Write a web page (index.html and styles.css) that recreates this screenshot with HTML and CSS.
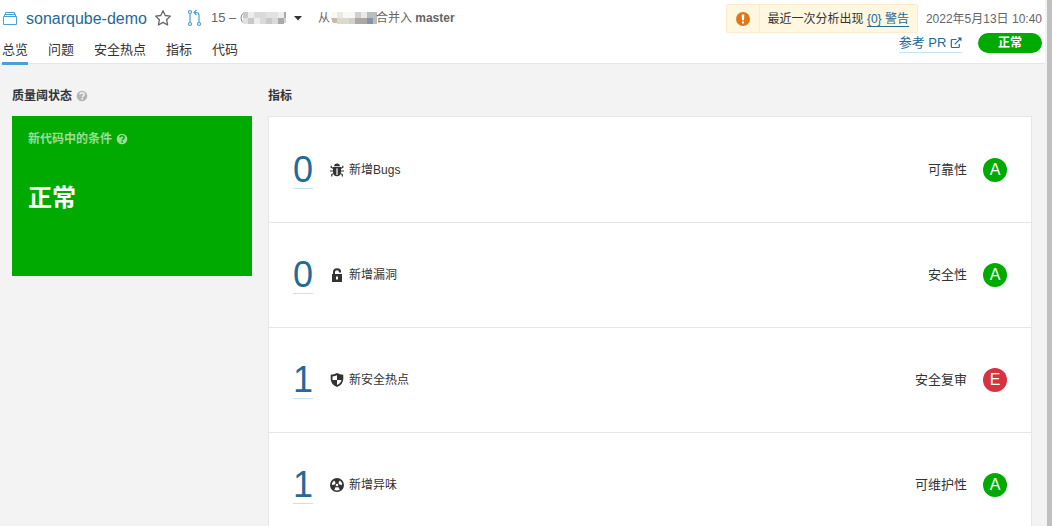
FILE: index.html
```html
<!DOCTYPE html>
<html lang="zh-CN">
<head>
<meta charset="utf-8">
<title>sonarqube-demo</title>
<link rel="stylesheet" href="styles.css">
</head>
<body>
<svg class="defs" aria-hidden="true">
  <symbol id="help" viewBox="0 0 12 12">
    <mask id="help-cut"><rect width="12" height="12" fill="#fff"/><path d="M4 4.600C4 3.300 4.900 2.700 6 2.700s2.100.7 2.100 1.800c0 1.400-1.700 1.400-1.800 2.800" fill="none" stroke="#000" stroke-width="1.500"/><rect x="5.400" y="8.100" width="1.600" height="1.500" fill="#000"/></mask>
    <circle cx="6" cy="6" r="5.300" fill="currentColor" mask="url(#help-cut)"/>
  </symbol>
</svg>
<div class="page">
  <header class="header">
    <div class="header-left">
      <div class="crumbs">
        <svg class="icon-project" width="16" height="16" viewBox="0 0 16 16" fill="none" stroke="#4b9fd5"><path d="M1.500 6.500h13v8h-13zM2.500 6.500v-2h11v2M3.500 4.500v-2h9v2"/></svg>
        <a class="project" href="#">sonarqube-demo</a>
        <button class="star" aria-label="收藏"><svg width="18" height="18" viewBox="0 0 18 18" fill="none" stroke="#666" stroke-width="1.300" stroke-linejoin="round"><path d="M9 1.700l2.200 4.800 5.200.6-3.800 3.600 1 5.300L9 13.400 4.400 16l1-5.300-3.800-3.600 5.200-.6z"/></svg></button>
        <svg class="icon-pr" width="16" height="18" viewBox="0 0 16 18" fill="none" stroke="#4b9fd5" stroke-width="1.200"><circle cx="3" cy="3" r="1.500"/><circle cx="3" cy="15" r="1.500"/><circle cx="12" cy="15" r="1.500"/><path d="M3 4.500v9M12 13.500V6.500Q12 3.500 9 3.500H7M9.500 1L7 3.500 9.500 6"/></svg>
        <button class="branch"><span>15 – </span><svg class="mosaic" width="47" height="12" viewBox="0 0 47 12" shape-rendering="crispEdges"><path d="M4 1Q1 2 1 6t3 5" fill="none" stroke="#888" shape-rendering="auto"/><path fill="#c9c9c9" d="M3 0h5v6H3zM26 6h6v6h-6zM8 6h6v6H8z"/><path fill="#ededed" d="M8 0h6v6H8zM38 0h6v6h-6zM14 6h6v6h-6z"/><path fill="#dadada" d="M14 0h12v6H14zM20 6h6v6h-6zM32 6h6v6h-6z"/><path fill="#e2e2e2" d="M26 0h12v6H26zM3 6h5v6H3z"/><path fill="#aaa" d="M38 6h6v6h-6zM44 0h2v6h-2z"/><path fill="#d0d0d0" d="M44 6h2v5h-2z"/></svg><svg class="caret" width="8" height="5" viewBox="0 0 8 5"><path d="M0 0h8L4 4.500z" fill="#333"/></svg></button>
        <p class="merge"><span>从</span><svg class="mosaic mosaic-source" width="48" height="12" viewBox="0 0 48 12" shape-rendering="crispEdges"><path fill="#faf8f3" d="M1 0h6v6H1zM13 0h12v6H13z"/><path fill="#e9e9e9" d="M7 0h6v6H7zM31 0h6v6h-6z"/><path fill="#d3cfd1" d="M25 0h6v6h-6zM19 6h6v6h-6z"/><path fill="#c8b9a8" d="M1 6h6v5H3z"/><path fill="#dedacb" d="M7 6h12v6H7z"/><path fill="#aaa9a5" d="M25 6h12v6H25z"/><path fill="#8794a8" d="M37 6h6v6h-6z"/><path fill="#b9bdc2" d="M37 0h10v6H37zM43 6h4v6h-4z"/></svg><span>合并入 <b>master</b></span></p>
      </div>
      <nav class="tabs">
        <a class="tab tab-active" href="#">总览</a>
        <a class="tab" href="#">问题</a>
        <a class="tab" href="#">安全热点</a>
        <a class="tab" href="#">指标</a>
        <a class="tab" href="#">代码</a>
      </nav>
    </div>
    <div class="header-right">
      <div class="meta">
        <div class="alert">
          <span class="alert-icon"><svg width="14" height="14" viewBox="0 0 14 14"><circle cx="7" cy="7" r="7" fill="#db781a"/><path d="M5.700 2.500h2.600L8 8.300H6zM6 9.500h2v2H6z" fill="#fff"/></svg></span>
          <span class="alert-text">最近一次分析出现 <a href="#">{0} 警告</a></span>
        </div>
        <time class="date">2022年5月13日 10:40</time>
      </div>
      <div class="status">
        <a class="pr-link" href="#">参考 PR <svg width="12" height="12" viewBox="0 0 12 12" fill="none" stroke="currentColor" stroke-width="1.200"><path d="M6.500 2.500H2.300Q1.300 2.500 1.300 3.500v6q0 1 1 1h6q1 0 1-1V7M4.700 7.300l5.500-5.500"/><path d="M7.500.5h4v4z" fill="currentColor" stroke="none"/></svg></a>
        <span class="pill">正常</span>
      </div>
    </div>
  </header>
  <main class="content">
    <section class="gate">
      <h2 class="title">质量阈状态 <svg class="help" width="12" height="12"><use href="#help"/></svg></h2>
      <div class="gate-card">
        <p class="gate-label">新代码中的条件 <svg class="gate-help" width="12" height="12"><use href="#help"/></svg></p>
        <p class="gate-value">正常</p>
      </div>
    </section>
    <section class="measures">
      <h2 class="title">指标</h2>
      <ul class="list">
        <li class="row">
          <a class="count" href="#">0</a>
          <svg class="row-icon" width="14" height="14" viewBox="0 0 14 14"><path d="M4 3.300Q4.300.5 7 .5t3 2.800zM3 4h8v5.500Q10.500 13 7 13.300 3.500 13 3 9.500z" fill="#333"/><path d="M6 5.500h2V12H6z" fill="#fff"/><path d="M6.600 5.500h.8V12h-.8z" fill="#333"/><path d="M3.500 5.500L1.200 4.300V2.800M10.500 5.500l2.300-1.200V2.800M0 8h3.500M10.500 8H14M3.700 10.500l-2 1v2M10.300 10.500l2 1v2" stroke="#333" fill="none" stroke-width="1.200"/></svg>
          <span class="name">新增Bugs</span><span class="domain">可靠性</span><span class="rating">A</span>
        </li>
        <li class="row">
          <a class="count" href="#">0</a>
          <svg class="row-icon" width="14" height="14" viewBox="0 0 14 14"><path fill="#333" fill-rule="evenodd" d="M2 6h1V4Q3 .2 7 .2T11 3.500V4.500H9V3.900Q9 2.200 7 2.200T5 4v2H12v8H2zM6 8.500v3h2v-3z"/></svg>
          <span class="name">新增漏洞</span><span class="domain">安全性</span><span class="rating">A</span>
        </li>
        <li class="row">
          <a class="count" href="#">1</a>
          <svg class="row-icon" width="14" height="14" viewBox="0 0 14 14"><path fill="#333" fill-rule="evenodd" d="M7 0Q4 1.800 .7 1.800V6q0 5.300 6.300 8 6.300-2.700 6.300-8V1.800Q10 1.800 7 0zM7 2.200V7h4.500Q11 10.200 7 12V7H2.500V3.400Q5 3.200 7 2.200z"/></svg>
          <span class="name">新安全热点</span><span class="domain">安全复审</span><span class="rating rating-e">E</span>
        </li>
        <li class="row">
          <a class="count" href="#">1</a>
          <svg class="row-icon" width="14" height="14" viewBox="0 0 14 14"><circle cx="7" cy="7" r="7" fill="#333"/><path fill="#fff" d="M1.900 5.800Q2.300 3.500 4.200 2.400L5.700 5Q4.900 5.500 4.700 6.600L2 7zM12.100 5.800Q11.700 3.500 9.800 2.400L8.300 5Q9.100 5.500 9.300 6.600L12 7zM4.200 11.700L5.700 9Q7 9.800 8.300 9l1.500 2.700Q7 13.100 4.200 11.700z"/><circle cx="7" cy="7" r="1.300" fill="#fff"/></svg>
          <span class="name">新增异味</span><span class="domain">可维护性</span><span class="rating">A</span>
        </li>
      </ul>
    </section>
  </main>
</div>
</body>
</html>
```
FILE: styles.css
```css
* { box-sizing: border-box; }
html { height: 100%; }
body {
  height: 100%;
  margin: 0;
  overflow: hidden;
  background: #f3f3f3;
  color: #333;
  font: 13px/20px "Liberation Sans", "Noto Sans CJK SC", sans-serif;
}
h2, p, ul { margin: 0; padding: 0; }
a { color: #236a97; text-decoration: none; }
button { padding: 0; border: 0; background: none; color: inherit; font: inherit; cursor: pointer; }
svg { flex: none; }
.defs { position: absolute; width: 0; height: 0; }
.page { min-height: 100%; border-right: 5px solid #c0c0c0; }

.header {
  display: flex;
  justify-content: space-between;
  margin-right: 2px;
  background: #fff;
  border-bottom: 1px solid #e6e6e6;
}
.header-left { display: flex; flex-direction: column; }
.crumbs { display: flex; align-items: center; height: 36px; padding-left: 2px; }
.project { margin: 0 7px 0 8px; padding-top: 2px; font-size: 16px; }
.star { display: flex; }
.icon-pr { margin: 0 8px 0 15px; }
.branch { display: flex; align-items: center; color: #666; white-space: pre; }
.caret { margin-left: 7px; }
.merge { display: flex; align-items: center; margin-left: 16px; color: #666; font-size: 12px; }
.mosaic-source { margin-right: -2px; }
.tabs { display: flex; flex: 1; gap: 20px; padding-left: 2px; }
.tab { height: 29px; margin-bottom: -2px; padding-top: 4px; border-bottom: 3px solid transparent; color: #333; }
.tab-active { border-color: #4b9fd5; }

.header-right { padding: 4px 3px 9px 0; }
.meta { display: flex; align-items: center; gap: 8px; font-size: 12px; }
.alert { display: flex; height: 29px; background: #fff7e0; border: 1px solid #faebcc; border-radius: 2px; }
.alert-icon { display: flex; align-items: center; padding: 0 9px; border-right: 1px solid #faebcc; }
.alert-text { padding: 4px 8px; }
.alert-text a { border-bottom: 1px solid #236a97; }
.date { color: #666; }
.status { display: flex; align-items: center; justify-content: flex-end; gap: 16px; }
.pr-link { height: 19px; line-height: 18px; border-bottom: 1px solid #cae3f2; }
.pr-link svg { vertical-align: -2px; }
.pill { width: 64px; border-radius: 10px; background: #0a0; color: #fff; font-size: 12px; font-weight: bold; text-align: center; }

.content { display: flex; gap: 16px; padding: 22px 15px 0 12px; }
.gate { flex: 0 0 240px; }
.measures { flex: 1; }
.title { display: flex; align-items: center; gap: 4px; margin-bottom: 10px; font-size: 12px; }
.help { color: #b4b4b4; }
.gate-card { min-height: 160px; padding: 13px 16px; background: #0a0; color: #fff; }
.gate-label { display: flex; align-items: center; gap: 4px; color: #99dd99; font-size: 12px; font-weight: 600; }
.gate-value { margin-top: 33px; font-size: 24px; line-height: 32px; font-weight: bold; }
.list { padding-top: 1px; background: #fff; border: 1px solid #e6e6e6; list-style: none; }
.row { display: flex; align-items: center; height: 105px; padding: 0 24px; border-bottom: 1px solid #e6e6e6; }
.count { height: 40px; margin-top: -3px; border-bottom: 1px solid #cae3f2; font-size: 36px; line-height: 42px; }
.row-icon { margin: 0 5px 0 17px; }
.name { font-size: 12px; }
.domain { margin-left: auto; }
.rating { width: 24px; height: 24px; margin-left: 16px; border-radius: 50%; background: #0a0; color: #fff; font-size: 16px; line-height: 24px; text-align: center; }
.rating-e { background: #d4333f; }
```
